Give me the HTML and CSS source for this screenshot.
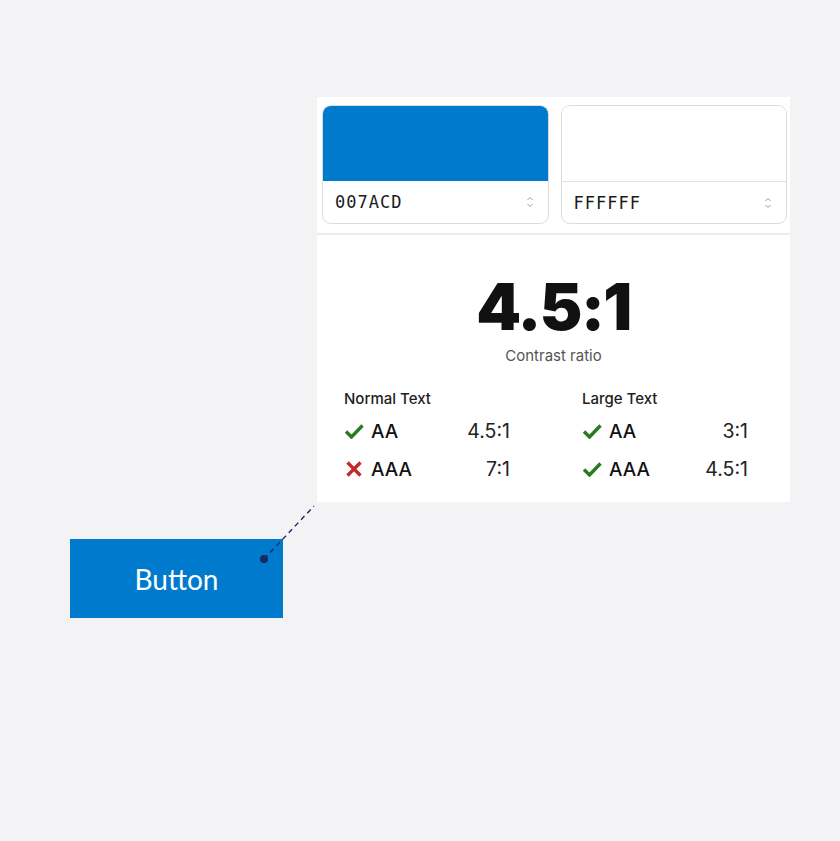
FILE: index.html
```html
<!DOCTYPE html>
<html>
<head>
<meta name="viewport" content="width=device-width, initial-scale=1">
<link rel="stylesheet" href="styles.css">
</head>
<body>

<div class="stage">
  <div class="checker">
    <div class="swatches">
      <div class="swatch">
        <div class="chip chip-blue"></div>
        <div class="field">
          <span class="hex">007ACD</span>
          <svg class="stepper" width="8" height="12" viewBox="0 0 8 12"><path d="M1.5 4 L4 1.5 L6.5 4 M1.5 8 L4 10.5 L6.5 8" fill="none" stroke="#999" stroke-width="1"/></svg>
        </div>
      </div>
      <div class="swatch">
        <div class="chip chip-white"></div>
        <div class="field">
          <span class="hex">FFFFFF</span>
          <svg class="stepper" width="8" height="12" viewBox="0 0 8 12"><path d="M1.5 4 L4 1.5 L6.5 4 M1.5 8 L4 10.5 L6.5 8" fill="none" stroke="#999" stroke-width="1"/></svg>
        </div>
      </div>
    </div>

    <div class="result">
      <div class="ratio">4.5:1</div>
      <div class="ratio-label">Contrast ratio</div>
    </div>

    <div class="levels">
      <div class="level">
        <div class="level-title">Normal Text</div>
        <div class="row">
          <svg class="mark" width="20" height="16" viewBox="0 0 20 16"><path d="M2 8.5 L7.5 14 L18.5 2.5" fill="none" stroke="#2b7a22" stroke-width="3.4"/></svg>
          <span class="grade">AA</span>
          <span class="val">4.5:1</span>
        </div>
        <div class="row">
          <svg class="mark" width="20" height="16" viewBox="0 0 20 16"><path d="M3.5 1.5 L16.5 14.5 M16.5 1.5 L3.5 14.5" fill="none" stroke="#c62828" stroke-width="3.2"/></svg>
          <span class="grade">AAA</span>
          <span class="val">7:1</span>
        </div>
      </div>
      <div class="level">
        <div class="level-title">Large Text</div>
        <div class="row">
          <svg class="mark" width="20" height="16" viewBox="0 0 20 16"><path d="M2 8.5 L7.5 14 L18.5 2.5" fill="none" stroke="#2b7a22" stroke-width="3.4"/></svg>
          <span class="grade">AA</span>
          <span class="val">3:1</span>
        </div>
        <div class="row">
          <svg class="mark" width="20" height="16" viewBox="0 0 20 16"><path d="M2 8.5 L7.5 14 L18.5 2.5" fill="none" stroke="#2b7a22" stroke-width="3.4"/></svg>
          <span class="grade">AAA</span>
          <span class="val">4.5:1</span>
        </div>
      </div>
    </div>
  </div>

  <div class="preview">
    <div class="btn">Button</div>
    <svg class="pointer" width="60" height="62" viewBox="0 0 60 62"><line x1="6" y1="56" x2="56" y2="3" stroke="#1b2a5c" stroke-width="1.4" stroke-dasharray="5 4"/><circle cx="6" cy="56" r="4" fill="#1b2a5c"/></svg>
  </div>
</div>

</body>
</html>
```

FILE: styles.css
```css
body {
    margin: 0;
    background: #f3f3f5;
    font-family: Inter, "Noto Sans", sans-serif;
    color: #111;
}

.stage {
    position: relative;
    height: 841px;
    padding-top: 97px;
    box-sizing: border-box;
}

.checker {
    margin-left: 317px;
    width: 473px;
    height: 405px;
    background: #fff;
}

.swatches {
    display: flex;
    gap: 12px;
    padding: 8px 3px 0 5px;
}

.swatch {
    width: 227px;
    height: 119px;
    border: 1px solid #dcdcdc;
    border-radius: 9px;
    overflow: hidden;
    box-sizing: border-box;
}

.chip {
    height: 75px;
}

.chip-blue {
    background: #007acd;
}

.chip-white {
    background: #fff;
    border-bottom: 1px solid #e2e2e2;
}

.field {
    height: 42px;
    display: flex;
    align-items: center;
    justify-content: space-between;
    padding: 0 14px 0 12px;
}

.hex {
    font-family: "DejaVu Sans Mono", "Liberation Mono", monospace;
    font-size: 17px;
    letter-spacing: 1px;
    color: #1a1a1a;
}

.result {
    margin-top: 9px;
    border-top: 2px solid #ececec;
    text-align: center;
    padding-top: 40px;
}

.ratio {
    font-size: 64px;
    font-weight: 900;
    line-height: 64px;
    letter-spacing: -1.5px;
    color: #111;
}

.ratio-label {
    font-size: 15px;
    color: #555;
    margin-top: 7px;
}

.levels {
    display: flex;
    gap: 72px;
    padding: 25px 0 0 27px;
}

.level {
    width: 166px;
}

.level-title {
    font-size: 15px;
    line-height: 18px;
    font-weight: 500;
    color: #222;
    margin-bottom: 4px;
}

.row {
    display: flex;
    align-items: center;
    height: 38px;
    font-size: 19px;
}

.mark {
    margin-right: 7px;
}

.grade {
    font-weight: 500;
}

.val {
    margin-left: auto;
    font-size: 19.5px;
    font-weight: 400;
    color: #222;
}

.preview {
    position: relative;
    margin: 37px 0 0 70px;
    width: 213px;
}

.btn {
    height: 79px;
    background: #007acd;
    color: #fff;
    font-family: Lato, "Noto Sans", sans-serif;
    font-size: 28px;
    display: flex;
    align-items: center;
    justify-content: center;
}

.pointer {
    position: absolute;
    left: 188px;
    top: -36px;
}
```
